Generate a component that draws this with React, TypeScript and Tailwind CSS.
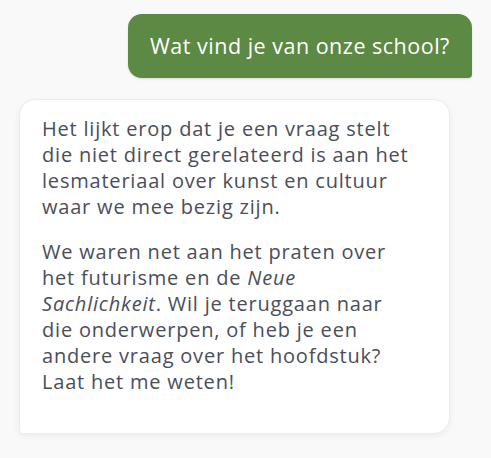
export default function App() {
    return (
        <div className="min-h-[458px] bg-[#f9f9f9] px-[19px] pt-[14px] font-['Open_Sans',sans-serif]">
            {/* User message */}
            <div className="flex justify-end">
                <div className="w-[344px] whitespace-nowrap rounded-[14px] rounded-br-[4px] bg-[#5c8943] px-[22px] py-[19px] text-[21.5px] leading-[26px] tracking-[0.5px] text-white shadow-sm">
                    Wat vind je van onze school?
                </div>
            </div>

            {/* Assistant reply */}
            <div className="mt-[21px] w-[431px] rounded-[16px] rounded-bl-[4px] border border-[#ececec] bg-white px-[22px] pt-[16px] pb-[38px] text-[20px] leading-[26px] tracking-[0.8px] text-[#4a4e5a] shadow-[0_2px_6px_rgba(0,0,0,0.06)]">
                <p>
                    Het lijkt erop dat je een vraag stelt<br />
                    die niet direct gerelateerd is aan het<br />
                    lesmateriaal over kunst en cultuur<br />
                    waar we mee bezig zijn.
                </p>
                <p className="mt-[19px]">
                    We waren net aan het praten over<br />
                    het futurisme en de <em>Neue</em><br />
                    <em>Sachlichkeit</em>. Wil je teruggaan naar<br />
                    die onderwerpen, of heb je een<br />
                    andere vraag over het hoofdstuk?<br />
                    Laat het me weten!
                </p>
            </div>
        </div>
    );
}
